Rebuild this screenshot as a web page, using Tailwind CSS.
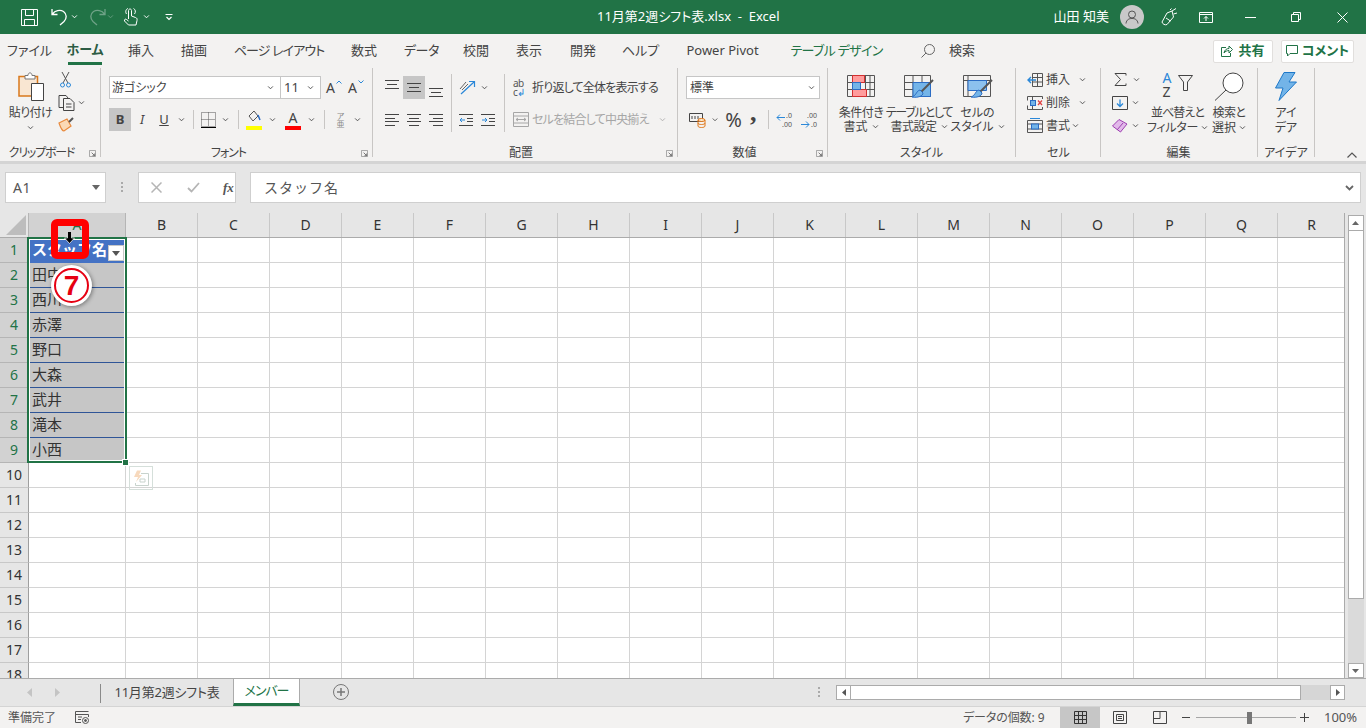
<!DOCTYPE html>
<html lang="ja">
<head>
<meta charset="UTF-8" />
<title>11月第2週シフト表.xlsx - Excel</title>
<script src="https://cdn.jsdelivr.net/npm/@tailwindcss/browser@4"></script>
</head>
<body class="w-[1366px] h-[728px] overflow-hidden bg-[#e6e6e6] text-[#444] text-[12px] font-['Noto_Sans','Noto_Sans_CJK_JP',sans-serif] [font-feature-settings:'palt']">

<svg class="hidden">
  <symbol id="chev" viewBox="0 0 8 5"><path d="M1 .5 4 3.5 7 .5" fill="none" stroke="#505050" stroke-width="1.2"/></symbol>
  <symbol id="chevw" viewBox="0 0 8 5"><path d="M1 .5 4 3.5 7 .5" fill="none" stroke="#fff" stroke-width="1.2"/></symbol>
  <symbol id="launcher" viewBox="0 0 8 8"><path d="M.5 .5H7.5V7.5H.5Z" fill="none" stroke="#999"/><path d="M3 3 6.5 6.5M6.5 4V6.5H4" fill="none" stroke="#666"/></symbol>
</svg>

<!-- title bar -->
<div class="h-[34px] bg-[#217346] flex items-center text-white relative">
  <svg class="w-[17px] h-[17px] ml-[21px]" viewBox="0 0 17 17" fill="none" stroke="#fff"><path d="M.5 .5H16.5V16.5H.5ZM4.5 .5V6.5H12.5V.5M3.5 16.5V10.5H13.5V16.5"/></svg>
  <svg class="w-[18px] h-[18px] ml-[13px]" viewBox="0 0 18 18" fill="none" stroke="#fff" stroke-width="1.3"><path d="M1 1V6.5H6.5M1.5 6C4 2.5 9 1.5 12.5 3.5 16 6 16 10.5 13 13.5L9 17"/></svg>
  <svg class="w-[7px] h-[4px] ml-[2px]"><use href="#chevw"/></svg>
  <svg class="w-[18px] h-[18px] ml-[10px]" viewBox="0 0 18 18" fill="none" stroke="#6fa287" stroke-width="1.3"><path d="M17 1V6.5H11.5M16.5 6C14 2.5 9 1.5 5.5 3.5 2 6 2 10.5 5 13.5L9 17"/></svg>
  <svg class="w-[7px] h-[4px] ml-[1px] opacity-30"><use href="#chevw"/></svg>
  <svg class="w-[15px] h-[18px] ml-[9px]" viewBox="0 0 15 18" fill="none" stroke="#fff"><path d="M5.5 11V2.5C5.5 .5 8.5 .5 8.5 2.5V8L12.5 9.5C14 10 14.300 11 14 12.500L13 17H5.500L1.500 13C1 11.500 2.500 10.500 3.500 11.500L5.500 13M3.500 6C2 3.500 3 1 5 .5M10.500 .5C12.500 1.500 13 4 11.500 6"/></svg>
  <svg class="w-[7px] h-[4px] ml-[5px]"><use href="#chevw"/></svg>
  <svg class="w-[8px] h-[7px] ml-[15px]" viewBox="0 0 8 7" fill="none" stroke="#fff"><path d="M.5 .5H7.500"/><path d="M1.500 3 4 5.500 6.500 3" stroke-width="1.200"/></svg>
  <div class="absolute left-[597px] top-[7px] text-[13px] leading-[19px] whitespace-pre">11月第2週シフト表.xlsx  -  Excel</div>
  <div class="ml-auto text-[13px] whitespace-nowrap">山田 知美</div>
  <div class="ml-[11px] w-[24px] h-[24px] rounded-full bg-[#c9c9c9] flex items-center justify-center">
    <svg class="w-[14px] h-[14px]" viewBox="0 0 14 14" fill="none" stroke="#555"><circle cx="7" cy="4.500" r="3.500"/><path d="M1 13.500C1.500 9.500 4 8.500 7 8.500S12.500 9.500 13 13.500"/></svg>
  </div>
  <svg class="w-[17px] h-[18px] ml-[17px]" viewBox="0 0 17 18" fill="none" stroke="#fff"><path d="M1 14 6 5 11 3 12.500 9 6 16.500C4 17.500 1.500 16 1 14ZM5 10 9.500 13M11 3 15 .5M12.500 6 16 5M9 2 10.500 .5"/></svg>
  <svg class="w-[14px] h-[11px] ml-[21px]" viewBox="0 0 14 11" fill="none" stroke="#fff"><path d="M.5 .5H13.500V10.500H.5ZM.5 2.500H13.500M7 9V4.500M5 6.500 7 4.500 9 6.500"/></svg>
  <div class="ml-[32px] w-[11px] h-[1px] bg-white"></div>
  <svg class="w-[10px] h-[10px] ml-[35px]" viewBox="0 0 10 10" fill="none" stroke="#fff"><path d="M.5 2.500H7.500V9.500H.5ZM2.500 2.500V.5H9.500V7.500H7.500"/></svg>
  <svg class="w-[11px] h-[11px] ml-[36px] mr-[18px]" viewBox="0 0 11 11" fill="none" stroke="#fff"><path d="M.5 .5 10.500 10.500M10.500 .5 .5 10.500"/></svg>
</div>

<!-- tabs -->
<div class="h-[34px] bg-[#f3f2f1] flex items-center text-[13px] whitespace-nowrap pl-[7px]">
  <div class="w-[38px] text-center">ファイル</div>
  <div class="ml-[23px] w-[34px] h-[28px] relative flex justify-center items-center font-bold text-[#2c5c43] border-b-[3px] border-[#217346]">ホーム</div>
  <div class="ml-[26px] w-[26px] text-center">挿入</div>
  <div class="ml-[27px] w-[26px] text-center">描画</div>
  <div class="ml-[29px] w-[86px] flex justify-center tracking-[-0.9px]">ページ レイアウト</div>
  <div class="ml-[29px] w-[26px] text-center">数式</div>
  <div class="ml-[27px] w-[32px] text-center tracking-[-0.5px]">データ</div>
  <div class="ml-[27px] w-[26px] text-center">校閲</div>
  <div class="ml-[27px] w-[26px] text-center">表示</div>
  <div class="ml-[28px] w-[25px] text-center">開発</div>
  <div class="ml-[27px] w-[33px] text-center">ヘルプ</div>
  <div class="ml-[30px] w-[75px] flex justify-center">Power Pivot</div>
  <div class="ml-[32px] w-[89px] flex justify-center text-[#217346] tracking-[-0.7px]">テーブル デザイン</div>
  <svg class="w-[14px] h-[14px] ml-[40px]" viewBox="0 0 14 14" fill="none" stroke="#666"><circle cx="8.500" cy="5.500" r="5"/><path d="M5 9 .5 13.500"/></svg>
  <div class="ml-[14px] w-[26px] text-center">検索</div>
  <div class="ml-[238px] w-[60px] h-[23px] bg-white border border-[#e1dfdd] rounded-[2px] flex items-center justify-center gap-[5px] font-bold text-[#217346]">
    <svg class="w-[12px] h-[12px]" viewBox="0 0 12 12" fill="none" stroke="#217346"><path d="M5 2.500H.5V11.500H9.500V8M3 8C3.500 5 5.500 3.500 8 3.500V1L11.500 4.500 8 8V5.500C6 5.500 4 6.500 3 8Z"/></svg>共有
  </div>
  <div class="ml-[8px] w-[73px] h-[23px] bg-white border border-[#e1dfdd] rounded-[2px] flex items-center justify-center gap-[4px] font-bold text-[#217346]">
    <svg class="w-[12px] h-[12px]" viewBox="0 0 12 12" fill="none" stroke="#217346"><path d="M.5 .5H11.500V8.500H4L1.500 11V8.500H.5Z"/></svg>コメント
  </div>
</div>

<!-- ribbon -->
<div class="h-[93px] bg-[#f3f2f1] flex relative">

  <!-- clipboard -->
  <div class="w-[101px] h-[89px] border-r border-[#c8c6c4] flex flex-col shrink-0">
    <div class="flex-1 flex">
      <div class="w-[60px] flex flex-col items-center pt-[4px] pl-[1px]">
        <svg class="w-[28px] h-[29px]" viewBox="0 0 28 29" fill="none"><path d="M2 4.500H20.500V24H2Z" fill="#f9e6d2" stroke="#d9781b" stroke-width="1.500"/><path d="M8 4.500V3.500H11C11 0 15 0 15 3.500H18V7H8Z" fill="#fff" stroke="#777"/><path d="M14.500 11.500H26.500V28.500H14.500Z" fill="#fff" stroke="#444"/></svg>
        <div class="leading-[15px] mt-[4px] -tracking-[0.5px]">貼り付け</div>
        <svg class="w-[7px] h-[4px] mt-[6px]"><use href="#chev"/></svg>
      </div>
      <div class="pt-[4px] flex flex-col">
        <svg class="w-[11px] h-[16px]" viewBox="0 0 11 16" fill="none" stroke="#555"><path d="M2 0 8 11M9 0 3 11"/><circle cx="2.500" cy="13" r="2" stroke="#2b88d8"/><circle cx="8.500" cy="13" r="2" stroke="#2b88d8"/></svg>
        <div class="flex items-center mt-[7px] -ml-[2px]">
          <svg class="w-[17px] h-[16px]" viewBox="0 0 17 16" fill="none" stroke="#444"><path d="M5 12.500H1V.5H8L10 3"/><path d="M5.500 3.500H12L16 7.500V15.500H5.500ZM8 9H13.500M8 12H13.500" fill="#f3f2f1"/></svg>
          <svg class="w-[7px] h-[4px] ml-[3px]"><use href="#chev"/></svg>
        </div>
        <svg class="w-[17px] h-[15px] mt-[6px] -ml-[2px]" viewBox="0 0 17 15" fill="none" stroke="#e8893c" stroke-width="1.200"><path d="M1 6 9 2 13 9 6 14C4 14 2 9 1 6Z" fill="#fbd9b5"/><path d="M11 5 15 1" stroke="#555" stroke-width="2"/></svg>
      </div>
    </div>
    <div class="relative flex justify-center -mb-[3px] leading-[14px] pr-[17px] -tracking-[1.200px]">クリップボード
      <svg class="absolute right-[4px] top-[4px] w-[7px] h-[7px]"><use href="#launcher"/></svg>
    </div>
  </div>

  <!-- font -->
  <div class="w-[272px] h-[89px] border-r border-[#c8c6c4] flex flex-col shrink-0 pl-[8px]">
    <div class="flex-1 pt-[8px]">
      <div class="flex items-center h-[23px]">
        <div class="w-[172px] h-[23px] bg-white border border-[#c6c6c6] flex items-center pl-[2px] pr-[6px] justify-between">游ゴシック<svg class="w-[7px] h-[4px]"><use href="#chev"/></svg></div>
        <div class="w-[40px] h-[23px] bg-white border border-[#c6c6c6] border-l-0 flex items-center pl-[3px] pr-[6px] justify-between text-[13px]">11<svg class="w-[7px] h-[4px]"><use href="#chev"/></svg></div>
        <div class="ml-[5px] w-[16px] text-[14px] relative leading-[17px]">A<svg class="absolute right-0 top-[1px] w-[6px] h-[4px]" viewBox="0 0 6 4" fill="none" stroke="#2b88d8"><path d="M.5 3.500 3 1 5.500 3.500"/></svg></div>
        <div class="ml-[6px] w-[16px] text-[14px] relative leading-[17px]">A<svg class="absolute right-0 top-[1px] w-[6px] h-[4px]" viewBox="0 0 6 4" fill="none" stroke="#2b88d8"><path d="M.5 .5 3 3 5.500 .5"/></svg></div>
      </div>
      <div class="flex items-center h-[23px] mt-[9px]">
        <div class="w-[22px] h-[23px] bg-[#c6c6c6] flex items-center justify-center font-bold text-[13px]">B</div>
        <div class="w-[22px] text-center italic text-[13px]">I</div>
        <div class="w-[22px] text-center underline text-[13px]">U</div>
        <svg class="w-[7px] h-[4px] ml-[3px]"><use href="#chev"/></svg>
        <div class="w-px h-[19px] bg-[#c8c6c4] ml-[8px]"></div>
        <svg class="w-[15px] h-[16px] ml-[7px]" viewBox="0 0 15 16" fill="none"><path d="M.5 .5H14.500V14.500H.5ZM7.500 .5V14.500M.5 7.500H14.500" stroke="#555" stroke-dasharray="1 1"/><path d="M0 15.500H15" stroke="#000"/></svg>
        <svg class="w-[7px] h-[4px] ml-[6px]"><use href="#chev"/></svg>
        <div class="w-px h-[19px] bg-[#c8c6c4] ml-[9px]"></div>
        <div class="ml-[7px] w-[16px] h-[20px] flex flex-col items-center">
          <svg class="w-[14px] h-[13px]" viewBox="0 0 14 13" fill="none" stroke="#555"><path d="M2 6 7 1 11 6 6 11Z"/><path d="M11 5 13 10" stroke="#2b6cc4" stroke-width="1.500"/></svg>
          <div class="w-[16px] h-[4px] bg-[#ffff00] mt-[3px]"></div>
        </div>
        <svg class="w-[7px] h-[4px] ml-[7px]"><use href="#chev"/></svg>
        <div class="ml-[9px] w-[16px] h-[20px] flex flex-col items-center">
          <div class="text-[14px] leading-[16px] h-[16px]">A</div>
          <div class="w-[16px] h-[4px] bg-[#ff0000]"></div>
        </div>
        <svg class="w-[7px] h-[4px] ml-[7px]"><use href="#chev"/></svg>
        <div class="w-px h-[19px] bg-[#c8c6c4] ml-[9px]"></div>
        <div class="ml-[11px] w-[9px] text-[8px] leading-[8px] text-[#8a8a8a] text-center">ア<br/>亜</div>
        <svg class="w-[7px] h-[4px] ml-[9px]"><use href="#chev"/></svg>
      </div>
    </div>
    <div class="relative flex justify-center -mb-[3px] leading-[14px] pr-[24px] -tracking-[1px]">フォント
      <svg class="absolute right-[4px] top-[4px] w-[7px] h-[7px]"><use href="#launcher"/></svg>
    </div>
  </div>

  <!-- alignment -->
  <div class="w-[305px] h-[89px] border-r border-[#c8c6c4] flex flex-col shrink-0">
    <div class="flex-1 flex pt-[8px] pl-[8px]">
      <div class="w-[66px] flex flex-col gap-[10px]">
        <div class="flex h-[23px]">
          <div class="w-[22px] flex items-start justify-center pt-[4px]"><svg class="w-[14px] h-[9px]" viewBox="0 0 14 9" stroke="#444"><path d="M0 .5H14M2 4.500H12M0 8.500H14"/></svg></div>
          <div class="w-[22px] bg-[#c6c6c6] flex items-center justify-center"><svg class="w-[14px] h-[9px]" viewBox="0 0 14 9" stroke="#444"><path d="M0 .5H14M2 4.500H12M0 8.500H14"/></svg></div>
          <div class="w-[22px] flex items-end justify-center pb-[2px]"><svg class="w-[14px] h-[9px]" viewBox="0 0 14 9" stroke="#444"><path d="M0 .5H14M2 4.500H12M0 8.500H14"/></svg></div>
        </div>
        <div class="flex h-[23px] -mt-[1px]">
          <div class="w-[22px] flex items-center justify-center"><svg class="w-[14px] h-[12px]" viewBox="0 0 14 12" stroke="#444"><path d="M0 .5H14M0 4.500H10M0 7.500H14M0 11.500H10"/></svg></div>
          <div class="w-[22px] flex items-center justify-center"><svg class="w-[14px] h-[12px]" viewBox="0 0 14 12" stroke="#444"><path d="M0 .5H14M2 4.500H12M0 7.500H14M2 11.500H12"/></svg></div>
          <div class="w-[22px] flex items-center justify-center"><svg class="w-[14px] h-[12px]" viewBox="0 0 14 12" stroke="#444"><path d="M0 .5H14M4 4.500H14M0 7.500H14M4 11.500H14"/></svg></div>
        </div>
      </div>
      <div class="w-px h-[58px] bg-[#c8c6c4] ml-[4px] -mt-[2px]"></div>
      <div class="w-[52px] pl-[7px] flex flex-col gap-[10px]">
        <div class="flex items-center h-[23px]">
          <svg class="w-[17px] h-[15px]" viewBox="0 0 17 15" fill="none"><path d="M1 9 7 2M3 10 9 4" stroke="#666"/><path d="M2 14 15 2M10 1.500H15.500V7" stroke="#2b88d8" stroke-width="1.200"/></svg>
          <svg class="w-[7px] h-[4px] ml-[5px]"><use href="#chev"/></svg>
        </div>
        <div class="flex items-center h-[23px] -mt-[1px]">
          <svg class="w-[14px] h-[12px]" viewBox="0 0 14 12" fill="none"><path d="M0 .5H14M0 11.500H14M8 4.500H14M8 7.500H14" stroke="#444"/><path d="M6 6H1M3 4 1 6 3 8" stroke="#2b88d8"/></svg>
          <svg class="w-[14px] h-[12px] ml-[8px]" viewBox="0 0 14 12" fill="none"><path d="M0 .5H14M0 11.500H14M8 4.500H14M8 7.500H14" stroke="#444"/><path d="M1 6H6M4 4 6 6 4 8" stroke="#2b88d8"/></svg>
        </div>
      </div>
      <div class="w-px h-[58px] bg-[#c8c6c4] -mt-[2px]"></div>
      <div class="pl-[8px] flex flex-col gap-[10px] whitespace-nowrap">
        <div class="flex items-center h-[23px]">
          <div class="w-[17px] text-[10px] leading-[9px] text-[#555] -tracking-[0.5px]">ab<br/>c<span class="text-[#2b88d8]">↲</span></div>
          <div class="ml-[2px] -tracking-[0.8px]">折り返して全体を表示する</div>
        </div>
        <div class="flex items-center h-[23px] -mt-[1px] text-[#a6a6a6]">
          <svg class="w-[16px] h-[15px]" viewBox="0 0 16 15" fill="none" stroke="#a6a6a6"><path d="M.5 .5H15.500V14.500H.5ZM.5 4H15.500M.5 11H15.500M3 7.500H13M5 6 3 7.500 5 9M11 6 13 7.500 11 9"/></svg>
          <div class="ml-[3px] -tracking-[0.8px]">セルを結合して中央揃え</div>
          <svg class="w-[7px] h-[4px] ml-[10px] opacity-40"><use href="#chev"/></svg>
        </div>
      </div>
    </div>
    <div class="relative flex justify-center -mb-[3px] leading-[14px] pr-[8px]">配置
      <svg class="absolute right-[4px] top-[4px] w-[7px] h-[7px]"><use href="#launcher"/></svg>
    </div>
  </div>

  <!-- number -->
  <div class="w-[150px] h-[89px] border-r border-[#c8c6c4] flex flex-col shrink-0 pl-[8px]">
    <div class="flex-1 pt-[8px]">
      <div class="w-[134px] h-[23px] bg-white border border-[#c6c6c6] flex items-center pl-[3px] pr-[4px] justify-between">標準<svg class="w-[7px] h-[4px]"><use href="#chev"/></svg></div>
      <div class="flex items-center h-[23px] mt-[9px] pl-[3px]">
        <svg class="w-[17px] h-[17px]" viewBox="0 0 17 17" fill="none"><path d="M.5 2.500H13.500V10.500H.5Z" stroke="#444"/><path d="M3 5V8M6 5V8M9 5V8" stroke="#444"/><ellipse cx="12.500" cy="9" rx="3.500" ry="1.500" fill="#fde7c8" stroke="#e0781b"/><path d="M9 9V15C9 17 16 17 16 15V9M9 12C9 14 16 14 16 12" stroke="#e0781b"/></svg>
        <svg class="w-[6px] h-[4px] ml-[6px]"><use href="#chev"/></svg>
        <div class="ml-[6px] w-[19px] text-[20px] leading-[20px] text-[#444] text-center">%</div>
        <div class="ml-[7px] -mt-[14px] font-['Liberation_Serif',serif] font-bold text-[26px] leading-[20px] h-[20px] w-[10px]">,</div>
        <div class="w-px h-[19px] bg-[#c8c6c4] ml-[8px]"></div>
        <div class="ml-[7px] w-[16px] h-[16px] relative text-[7px] leading-[7px] text-[#555] text-right"><svg class="absolute left-0 top-[2px] w-[9px] h-[7px]" viewBox="0 0 9 7" fill="none" stroke="#2b88d8"><path d="M9 3.500H1M4 .5 1 3.500 4 6.500"/></svg>.0<br/><span class="block mt-[2px]">.00</span></div>
        <div class="ml-[9px] w-[16px] h-[16px] relative text-[7px] leading-[7px] text-[#555] text-right">.00<br/><span class="block mt-[2px]">.0</span><svg class="absolute left-0 bottom-[0px] w-[9px] h-[7px]" viewBox="0 0 9 7" fill="none" stroke="#2b88d8"><path d="M0 3.500H8M5 .5 8 3.500 5 6.500"/></svg></div>
      </div>
    </div>
    <div class="relative flex justify-center -mb-[3px] leading-[14px] pr-[24px]">数値
      <svg class="absolute right-[4px] top-[4px] w-[7px] h-[7px]"><use href="#launcher"/></svg>
    </div>
  </div>

  <!-- styles -->
  <div class="w-[188px] h-[89px] border-r border-[#c8c6c4] flex flex-col shrink-0">
    <div class="flex-1 flex pl-[8px] pt-[7px] text-center leading-[14px] whitespace-nowrap">
      <div class="w-[50px] flex flex-col items-center">
        <svg class="w-[28px] h-[22px] mb-[9px]" viewBox="0 0 28 22" fill="none"><path d="M.5 .5H27.500V21.500H.5ZM.5 7.500H27.500M.5 14.500H27.500M9.500 .5V21.500M18.500 .5V21.500M23 .5V21.500" stroke="#555"/><path d="M5.500 .5H17.500V7.500H5.500ZM5.500 14.500H19.500V21.500H5.500Z" fill="#ff9c9c" stroke="#d32f2f"/><path d="M5.500 7.500H13.500V14.500H5.500Z" fill="#73b4e8" stroke="#2b6cc4"/></svg>
        <div class="-tracking-[0.5px]">条件付き</div>
        <div class="flex items-center gap-[4px]">書式<svg class="w-[7px] h-[4px]"><use href="#chev"/></svg></div>
      </div>
      <div class="w-[66px] flex flex-col items-center">
        <svg class="w-[30px] h-[24px] mb-[7px]" viewBox="0 0 30 24" fill="none"><path d="M.5 .5H26.500V21.500H.5ZM.5 7.500H26.500M.5 14.500H26.500M9 .5V21.500M18 .5V21.500" stroke="#555"/><path d="M9 7.500H26.500V21.500H9Z" fill="#73b4e8" stroke="#2b6cc4"/><path d="M29 5 17 17" stroke="#555" stroke-width="2"/><path d="M16 15C12 16 13 20 8 22 14 23 19 21 19 18Z" fill="#73b4e8" stroke="#2b6cc4"/></svg>
        <div class="-tracking-[1.200px]">テーブルとして</div>
        <div class="flex items-center gap-[4px] -tracking-[0.5px]">書式設定<svg class="w-[7px] h-[4px]"><use href="#chev"/></svg></div>
      </div>
      <div class="w-[51px] flex flex-col items-center">
        <svg class="w-[30px] h-[24px] mb-[7px]" viewBox="0 0 30 24" fill="none"><path d="M.5 .5H27.500V21.500H.5ZM.5 5.500H27.500M5 .5V21.500" stroke="#555"/><path d="M5 5.500H23.500V15.500H5Z" fill="#8cc1ee" stroke="#2b6cc4"/><path d="M29 5 17 17" stroke="#555" stroke-width="2"/><path d="M16 15C12 16 13 20 8 22 14 23 19 21 19 18Z" fill="#73b4e8" stroke="#2b6cc4"/></svg>
        <div>セルの</div>
        <div class="flex items-center gap-[4px]">スタイル<svg class="w-[7px] h-[4px]"><use href="#chev"/></svg></div>
      </div>
    </div>
    <div class="flex justify-center -mb-[3px] leading-[14px] pl-[0px]">スタイル</div>
  </div>

  <!-- cells -->
  <div class="w-[85px] h-[89px] border-r border-[#c8c6c4] flex flex-col shrink-0 pl-[11px]">
    <div class="flex-1 pt-0">
      <div class="flex items-center h-[23px]">
        <svg class="w-[16px] h-[14px]" viewBox="0 0 16 14" fill="none"><path d="M5.500 .5H15.500V13.500H5.500ZM5.500 4.500H15.500M5.500 9H15.500M10.500 .5V13.500" stroke="#555"/><path d="M9 7H1M4 4 1 7 4 10" stroke="#2b88d8" stroke-width="1.400"/></svg>
        <div class="ml-[3px] w-[24px]">挿入</div>
        <svg class="w-[7px] h-[4px] ml-[9px]"><use href="#chev"/></svg>
      </div>
      <div class="flex items-center h-[23px]">
        <svg class="w-[16px] h-[14px]" viewBox="0 0 16 14" fill="none"><path d="M.5 .5H15.500M.5 13.500H15.500M.5 .5V4.500M15.500 .5V3M.5 9.500V13.500M15.500 11V13.500M5.500 .5V13.500" stroke="#555"/><rect x="3.500" y="4.500" width="5" height="5" fill="#73b4e8" stroke="#2b6cc4"/><path d="M11 4.500 15 9M15 4.500 11 9" stroke="#e04343" stroke-width="1.300"/></svg>
        <div class="ml-[3px] w-[24px]">削除</div>
        <svg class="w-[7px] h-[4px] ml-[9px]"><use href="#chev"/></svg>
      </div>
      <div class="flex items-center h-[23px]">
        <svg class="w-[16px] h-[15px]" viewBox="0 0 16 15" fill="none"><path d="M.5 2.500H15.500V14.500H.5ZM.5 6H15.500M.5 11H15.500" stroke="#555"/><rect x="4.500" y="6" width="7" height="5" fill="#73b4e8" stroke="#2b6cc4"/><path d="M3 .5H13" stroke="#2b88d8"/></svg>
        <div class="ml-[3px] w-[24px]">書式</div>
        <svg class="w-[7px] h-[4px] ml-[2px]"><use href="#chev"/></svg>
      </div>
    </div>
    <div class="flex justify-center -mb-[3px] leading-[14px] pr-[10px]">セル</div>
  </div>

  <!-- editing -->
  <div class="w-[157px] h-[89px] border-r border-[#c8c6c4] flex flex-col shrink-0">
    <div class="flex-1 flex">
      <div class="pl-[12px] w-[50px]">
        <div class="flex items-center h-[23px]">
          <svg class="w-[13px] h-[13px] ml-[1px]" viewBox="0 0 13 13" fill="none" stroke="#444"><path d="M12 2.500V.5H1L6.500 6.500 1 12.500H12V10.500"/></svg>
          <svg class="w-[7px] h-[4px] ml-[6px]"><use href="#chev"/></svg>
        </div>
        <div class="flex items-center h-[23px]">
          <svg class="w-[16px] h-[14px] -ml-[1px]" viewBox="0 0 16 14" fill="none"><path d="M.5 .5H15.500V13.500H.5Z" stroke="#444"/><path d="M8 3.500V10M5 7.500 8 10.500 11 7.500" stroke="#2b88d8" stroke-width="1.300"/></svg>
          <svg class="w-[7px] h-[4px] ml-[4px]"><use href="#chev"/></svg>
        </div>
        <div class="flex items-center h-[23px]">
          <svg class="w-[16px] h-[14px] -ml-[1px]" viewBox="0 0 16 14" fill="none" stroke="#9d3fb1"><path d="M.5 7 7 .5 15 5 8.500 13Z" fill="#e2b9ea"/><path d="M5 11 11 4" fill="none"/></svg>
          <svg class="w-[7px] h-[4px] ml-[4px]"><use href="#chev"/></svg>
        </div>
      </div>
      <div class="w-[53px] flex flex-col items-center pt-[4px] leading-[15px] whitespace-nowrap">
        <div class="h-[29px] w-[30px] relative">
          <div class="absolute left-0 -top-[1px] text-[14px] leading-[14px] text-[#2b88d8]">A</div>
          <div class="absolute left-0 top-[13px] text-[14px] leading-[14px]">Z</div>
          <svg class="absolute right-0 top-[3px] w-[15px] h-[16px]" viewBox="0 0 15 16" fill="none" stroke="#444"><path d="M.5 .5H14.500L9.500 7V15.500H5.500V7Z"/></svg>
        </div>
        <div class="mt-[4px] -tracking-[0.9px]">並べ替えと</div>
        <div class="flex items-center gap-[3px] -tracking-[0.3px]">フィルター<svg class="w-[7px] h-[4px]"><use href="#chev"/></svg></div>
      </div>
      <div class="w-[42px] ml-[4px] flex flex-col items-center pt-[4px] leading-[15px] whitespace-nowrap">
        <svg class="w-[30px] h-[29px]" viewBox="0 0 30 29" fill="none" stroke="#444"><circle cx="19" cy="11" r="10" fill="#fff"/><path d="M12 18 1 28.500"/></svg>
        <div class="mt-[4px] -tracking-[0.5px]">検索と</div>
        <div class="flex items-center gap-[3px]">選択<svg class="w-[7px] h-[4px]"><use href="#chev"/></svg></div>
      </div>
    </div>
    <div class="flex justify-center -mb-[3px] leading-[14px] pr-[1px]">編集</div>
  </div>

  <!-- ideas -->
  <div class="w-[57px] h-[89px] border-r border-[#c8c6c4] flex flex-col items-center shrink-0 leading-[15px] text-center">
    <div class="flex-1 flex flex-col items-center pt-[4px]">
      <svg class="w-[22px] h-[29px]" viewBox="0 0 22 29" fill="#73b4e8" stroke="#1e78c8"><path d="M9 .5H20L14 10H21.500L4 28.500 8 16H.5Z"/></svg>
      <div class="mt-[4px]">アイ</div>
      <div>デア</div>
    </div>
    <div class="-mb-[3px] leading-[14px]">アイデア</div>
  </div>

  <svg class="absolute left-[1347px] top-[84px] w-[10px] h-[6px]" viewBox="0 0 10 6" fill="none" stroke="#555" stroke-width="1.200"><path d="M.5 5.500 5 1 9.500 5.500"/></svg>
</div>
<div class="h-[3px] bg-[#d4d4d4]"></div>

<!-- formula bar -->
<div class="h-[49px] flex items-start pt-[8px] pl-[5px] bg-[#e6e6e6]">
  <div class="w-[101px] h-[31px] bg-white border border-[#cfcfcf] flex items-center justify-between pl-[7px] pr-[5px] text-[14px] text-[#555] tracking-[0.5px]">A1
    <svg class="w-[8px] h-[5px]" viewBox="0 0 8 5" fill="#666"><path d="M0 0H8L4 5Z"/></svg>
  </div>
  <svg class="w-[3px] h-[11px] ml-[15px] mt-[10px]" viewBox="0 0 3 11" fill="#aaa"><rect x="0" y="0" width="2" height="2"/><rect x="0" y="4" width="2" height="2"/><rect x="0" y="8" width="2" height="2"/></svg>
  <div class="ml-[14px] w-[98px] h-[31px] bg-white border border-[#cfcfcf] flex items-center">
    <svg class="w-[11px] h-[11px] ml-[12px]" viewBox="0 0 11 11" fill="none" stroke="#b5b5b5" stroke-width="1.500"><path d="M.5 .5 10.500 10.500M10.500 .5 .5 10.500"/></svg>
    <svg class="w-[13px] h-[11px] ml-[25px]" viewBox="0 0 13 11" fill="none" stroke="#b5b5b5" stroke-width="1.800"><path d="M1 6 4.500 9.500 12 1"/></svg>
    <div class="ml-[23px] font-['Liberation_Serif',serif] italic font-bold text-[13px] text-[#555]">fx</div>
  </div>
  <div class="ml-[14px] w-[1111px] h-[31px] bg-white border border-[#cfcfcf] flex items-center justify-between pl-[13px] pr-[6px] text-[14px] tracking-[1px] text-[#555] [font-feature-settings:normal]">スタッフ名
    <svg class="w-[9px] h-[6px]" viewBox="0 0 9 6" fill="none" stroke="#666" stroke-width="1.800"><path d="M1 1 4.500 4.500 8 1"/></svg>
  </div>
</div>

<!-- grid + vertical scrollbar -->
<div class="h-[465px] flex">
  <div id="sheet" class="w-[1345px] h-[465px] overflow-hidden relative bg-white border-r border-[#ababab]">
    <div id="colhead" class="flex h-[25px] bg-[#e6e6e6] border-b border-[#ababab]">
      <div class="w-[29px] h-[24px] border-r border-[#b5b5b5] bg-[#e6e6e6] relative shrink-0 overflow-hidden">
        <svg class="absolute right-[2px] bottom-[2px] w-[20px] h-[20px]" viewBox="0 0 20 20" fill="#bdbdbd"><path d="M20 0V20H0Z"/></svg>
      </div>
    </div>
    <div id="rows"></div>

    <!-- selection outline -->
    <div class="absolute left-[27px] top-[24px] w-[100px] h-[226px] border-2 border-[#217346] shadow-[inset_0_0_0_1px_#fff]"></div>
    <div class="absolute left-[122px] top-[246px] w-[7px] h-[7px] bg-[#217346] border border-white"></div>

    <!-- table header filter button -->
    <div class="absolute left-[108px] top-[32px] w-[16px] h-[16px] bg-white border border-[#c8c8c8] flex items-center justify-center">
      <svg class="w-[8px] h-[5px]" viewBox="0 0 8 5" fill="#555"><path d="M0 0H8L4 5Z"/></svg>
    </div>

    <!-- quick analysis -->
    <div class="absolute left-[129px] top-[253px] w-[24px] h-[24px] border border-[#d5dfda] flex items-center justify-center">
      <svg class="w-[16px] h-[16px]" viewBox="0 0 16 16" fill="none"><path d="M4 .5 1 7H5L3 12 9 5H6L8 .5Z" fill="#f7d9bd"/><path d="M8 3.500H15.500V15.500H2.500V13M7 9H12V12H7Z" stroke="#c8d3cd"/></svg>
    </div>

    <!-- red callout -->
    <div class="absolute left-[51px] top-[6px] w-[38px] h-[40px] border-[7px] border-[#ff0000] rounded-[6px]"></div>
    <svg class="absolute left-[64px] top-[18px] w-[11px] h-[13px]" viewBox="0 0 11 13" fill="#000" stroke="#fff" stroke-width=".7"><path d="M3.500 .5H7.500V7H10.500L5.500 12.500 .5 7H3.500Z"/></svg>
    <div class="absolute left-[51px] top-[52px] w-[41px] h-[41px] rounded-full bg-white shadow-[1px_1px_4px_rgba(0,0,0,0.4)] flex items-center justify-center">
      <div class="w-[35px] h-[35px] rounded-full border-2 border-[#e60012] flex items-center justify-center text-[#e60012] font-bold text-[28px] leading-none font-['Liberation_Sans',sans-serif]">7</div>
    </div>
  </div>
  <div class="w-[21px] h-[465px] flex flex-col items-center pt-[2px] bg-[#e6e6e6]">
    <div class="w-[16px] h-[16px] bg-white border border-[#ababab] flex items-center justify-center">
      <svg class="w-[7px] h-[4px]" viewBox="0 0 7 4" fill="#666"><path d="M3.500 0 7 4H0Z"/></svg>
    </div>
    <div class="w-[16px] h-[368px] bg-white border border-t-0 border-[#ababab]"></div>
    <div class="w-[16px] flex-1 bg-[#dadada]"></div>
    <div class="w-[16px] h-[15px] bg-white border border-[#ababab] flex items-center justify-center">
      <svg class="w-[7px] h-[4px]" viewBox="0 0 7 4" fill="#666"><path d="M0 0H7L3.500 4Z"/></svg>
    </div>
  </div>
</div>

<!-- sheet tabs -->
<div class="h-[28px] flex bg-[#e6e6e6] border-t border-[#ababab] whitespace-nowrap">
  <svg class="w-[5px] h-[9px] ml-[27px] mt-[9px]" viewBox="0 0 5 9" fill="#c4c4c4"><path d="M5 0V9L0 4.500Z"/></svg>
  <svg class="w-[5px] h-[9px] ml-[23px] mt-[9px]" viewBox="0 0 5 9" fill="#c4c4c4"><path d="M0 0V9L5 4.500Z"/></svg>
  <div class="ml-[40px] w-px h-[19px] mt-[5px] bg-[#8a8a8a]"></div>
  <div class="w-[132px] h-[27px] flex items-center justify-center text-[13px] -tracking-[0.2px]">11月第2週シフト表</div>
  <div class="w-[67px] h-[27px] bg-white border-x border-[#ababab] border-b-[3px] border-b-[#217346] flex items-center justify-center text-[#217346] text-[13px] -tracking-[1px]">メンバー</div>
  <svg class="w-[16px] h-[16px] ml-[33px] mt-[5px]" viewBox="0 0 16 16" fill="none" stroke="#777"><circle cx="8" cy="8" r="7.500"/><path d="M8 4V12M4 8H12" stroke-width="1.500"/></svg>
  <svg class="w-[3px] h-[11px] ml-[469px] mt-[8px]" viewBox="0 0 3 11" fill="#aaa"><rect x="0" y="0" width="2" height="2"/><rect x="0" y="4" width="2" height="2"/><rect x="0" y="8" width="2" height="2"/></svg>
  <div class="ml-[15px] w-[509px] h-[15px] mt-[6px] flex">
    <div class="w-[15px] bg-white border border-[#ababab] flex items-center justify-center"><svg class="w-[4px] h-[7px]" viewBox="0 0 4 7" fill="#555"><path d="M4 0V7L0 3.500Z"/></svg></div>
    <div class="w-[450px] bg-white border-y border-r border-[#ababab]"></div>
    <div class="flex-1 bg-[#d6d6d6]"></div>
    <div class="w-[15px] bg-white border border-[#ababab] flex items-center justify-center"><svg class="w-[4px] h-[7px]" viewBox="0 0 4 7" fill="#555"><path d="M0 0V7L4 3.500Z"/></svg></div>
  </div>
</div>

<!-- status bar -->
<div class="h-[22px] bg-[#f3f2f1] border-t border-[#d4d4d4] flex items-center text-[#555] whitespace-nowrap">
  <div class="ml-[8px] w-[48px]">準備完了</div>
  <svg class="w-[14px] h-[13px] ml-[19px]" viewBox="0 0 14 13" fill="none" stroke="#555"><path d="M.5 .5H13.500M.5 .5V11.500H6M.5 3.500H13.500V6M3 6H7M3 8.500H6"/><circle cx="10.500" cy="9.500" r="3"/><circle cx="10.500" cy="9.500" r="1" fill="#555"/></svg>
  <div class="ml-[874px] w-[79px] -tracking-[0.1px]">データの個数: 9</div>
  <div class="ml-[18px] w-[40px] h-[21px] bg-[#c6c6c6] flex items-center justify-center">
    <svg class="w-[13px] h-[13px]" viewBox="0 0 13 13" fill="none" stroke="#333"><path d="M.5 .5H12.500V12.500H.5ZM4.500 .5V12.500M8.500 .5V12.500M.5 4.500H12.500M.5 8.500H12.500"/></svg>
  </div>
  <svg class="w-[14px] h-[13px] ml-[13px]" viewBox="0 0 14 13" fill="none" stroke="#444"><path d="M.5 .5H13.500V12.500H.5ZM3.500 3.500H10.500V9.500H3.500ZM5 5.500H9M5 7.500H9"/></svg>
  <svg class="w-[14px] h-[13px] ml-[26px]" viewBox="0 0 14 13" fill="none" stroke="#444"><path d="M.5 .5H13.500V12.500H.5ZM.5 7.500H7M7 .5V7.500"/></svg>
  <div class="ml-[15px] w-[8px] h-px bg-[#444]"></div>
  <div class="ml-[6px] w-[100px] h-[6px] flex items-center justify-center relative">
    <div class="w-full h-px bg-[#a6a6a6]"></div>
    <div class="absolute left-[51px] top-[-3px] w-[5px] h-[12px] bg-[#777]"></div>
  </div>
  <svg class="w-[9px] h-[9px] ml-[4px]" viewBox="0 0 9 9" stroke="#444"><path d="M0 4.500H9M4.500 0V9"/></svg>
  <div class="ml-[15px] text-[13px]">100%</div>
</div>

<script>
  // build the worksheet: column headers and rows
  const colHead = document.getElementById("colhead");
  const letters = "ABCDEFGHIJKLMNOPQR".split("");
  letters.forEach((letter, i) => {
    const head = document.createElement("div");
    head.className = i === 0
      ? "w-[97px] h-[24px] shrink-0 bg-[#d2d2d2] border-r border-[#b5b5b5] flex items-center justify-center pb-[2px] text-[14px] text-[#217346]"
      : i === 17
        ? "w-[67px] h-[24px] shrink-0 flex items-center justify-center pb-[2px] text-[14px] text-[#333]"
        : "w-[72px] h-[24px] shrink-0 border-r border-[#c8c8c8] flex items-center justify-center pb-[2px] text-[14px] text-[#333]";
    head.textContent = letter;
    colHead.appendChild(head);
  });

  const names = ["スタッフ名", "田中", "西川", "赤澤", "野口", "大森", "武井", "滝本", "小西"];
  const rows = document.getElementById("rows");
  for (let r = 1; r <= 18; r++) {
    const row = document.createElement("div");
    row.className = "flex h-[25px] shrink-0";
    const selected = r <= 9;

    const num = document.createElement("div");
    num.className = selected
      ? "w-[29px] shrink-0 h-[25px] bg-[#d2d2d2] border-r border-b border-r-[#9e9e9e] border-b-[#b5b5b5] flex items-center justify-center pb-[2px] text-[14px] text-[#217346]"
      : "w-[29px] shrink-0 h-[25px] bg-[#e6e6e6] border-r border-b border-r-[#9e9e9e] border-b-[#c8c8c8] flex items-center justify-center pb-[2px] text-[14px] text-[#333]";
    num.textContent = r;
    row.appendChild(num);

    const first = document.createElement("div");
    if (r === 1) {
      first.className = "w-[97px] shrink-0 h-[25px] bg-[#4472c4] text-white font-bold text-[15px] pl-[3px] pb-[2px] flex items-center whitespace-nowrap [font-feature-settings:normal]";
    } else if (selected) {
      first.className = r === 9
        ? "w-[97px] shrink-0 h-[25px] bg-[#c6c6c6] text-[#333] text-[15px] pl-[3px] pb-[2px] flex items-center"
        : "w-[97px] shrink-0 h-[25px] bg-[#c6c6c6] border-b border-[#2f5597] text-[#333] text-[15px] pl-[3px] pb-[2px] flex items-center";
    } else {
      first.className = "w-[97px] shrink-0 h-[25px] border-r border-b border-[#d4d4d4]";
    }
    if (selected) first.textContent = names[r - 1];
    row.appendChild(first);

    for (let c = 1; c < 18; c++) {
      const cell = document.createElement("div");
      cell.className = c === 17
        ? "w-[67px] shrink-0 h-[25px] border-b border-[#d4d4d4]"
        : "w-[72px] shrink-0 h-[25px] border-r border-b border-[#d4d4d4]";
      row.appendChild(cell);
    }
    rows.appendChild(row);
  }
</script>
</body>
</html>
